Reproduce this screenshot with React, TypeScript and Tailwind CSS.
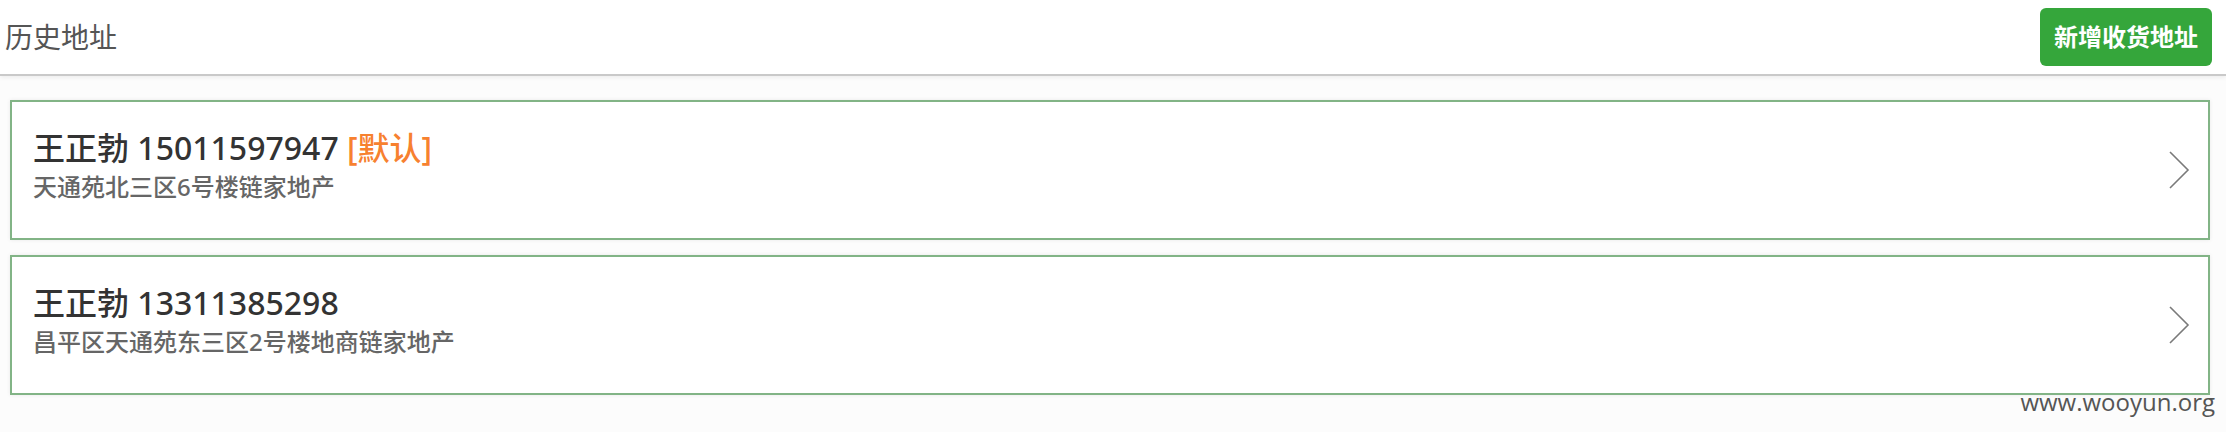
import React from "react";

type Address = {
  name: string;
  phone: string;
  detail: string;
  isDefault?: boolean;
};

const addresses: Address[] = [
  { name: "王正勃", phone: "15011597947", detail: "天通苑北三区6号楼链家地产", isDefault: true },
  { name: "王正勃", phone: "13311385298", detail: "昌平区天通苑东三区2号楼地商链家地产" },
];

function Chevron() {
  return (
    <svg width="22" height="40" viewBox="0 0 22 40" fill="none" className="shrink-0">
      <polyline points="2,2 20,20 2,38" stroke="#7a7a7a" strokeWidth="1.6" />
    </svg>
  );
}

function AddressCard({ item }: { item: Address }) {
  return (
    <div className="flex h-[140px] items-center justify-between border-2 border-[#82b486] bg-white pl-[21px] pr-[18px] shadow-[0_0_4px_rgba(0,0,0,0.08)]">
      <div className="flex flex-col pb-[8px]">
        <div className="text-[32px] font-medium leading-[40px] text-[#333]">
          {item.name} {item.phone}
          {item.isDefault && <span className="text-[#f7812f]"> [默认]</span>}
        </div>
        <div className="mt-[2px] text-[24px] font-medium leading-[34px] text-[#666]">{item.detail}</div>
      </div>
      <Chevron />
    </div>
  );
}

export default function App() {
  return (
    <div
      className="h-[432px] w-full overflow-hidden bg-[#fcfcfc]"
      style={{ fontFamily: '"Noto Sans", "Noto Sans CJK SC", sans-serif' }}
    >
      {/* Header */}
      <div className="flex h-[76px] items-center justify-between border-b-2 border-[#c9c9c9] bg-white pl-[5px] pr-[14px] shadow-[0_2px_4px_rgba(0,0,0,0.06)]">
        <div className="text-[28px] text-[#555]">历史地址</div>
        <button className="flex h-[58px] w-[172px] items-center justify-center rounded-[6px] bg-[#35a63b] text-[24px] font-bold text-white">
          新增收货地址
        </button>
      </div>

      {/* List */}
      <div className="flex flex-col gap-[15px] pl-[10px] pr-[16px] pt-[24px]">
        {addresses.map((a) => (
          <AddressCard key={a.phone} item={a} />
        ))}
      </div>

      <div className="mt-[-5px] flex justify-end pr-[11px]">
        <span className="text-[24px] leading-none text-[#555]" style={{ fontFamily: '"Open Sans", sans-serif' }}>
          www.wooyun.org
        </span>
      </div>
    </div>
  );
}
